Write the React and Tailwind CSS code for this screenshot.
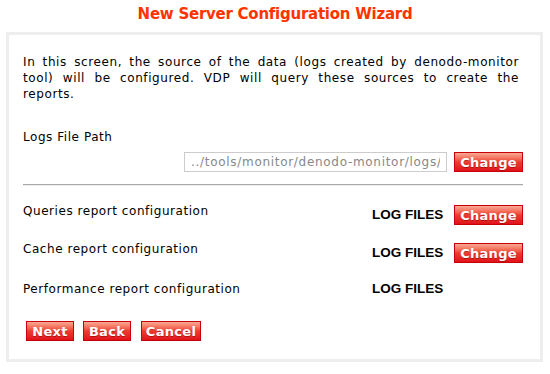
const Btn = ({ label, w }) => (
    <button
        type="button"
        className={`h-[20px] ${w} border border-[#c8000a] bg-gradient-to-b from-[#f7a893] via-[#ee3a30] to-[#e0101a] text-white font-bold text-[13px] leading-none tracking-[0.3px] [text-shadow:0_1px_0_rgba(120,0,0,0.5)] flex items-center justify-center`}
    >
        {label}
    </button>
);

const ConfigRow = ({ label, withButton, className = '' }) => (
    <div className={`flex items-start ${className}`}>
        <div className="flex-1 leading-[16px]">{label}</div>
        <div className={`flex items-center w-[151px] ${withButton ? 'mt-[2px]' : ''}`}>
            <span
                className="w-[74px] mr-[8px] font-bold text-[13.5px] leading-[16px] tracking-normal whitespace-nowrap"
                style={{ fontFamily: '"Liberation Sans", Arial, sans-serif' }}
            >
                LOG FILES
            </span>
            {withButton && <Btn label="Change" w="w-[69px]" />}
        </div>
    </div>
);

export default function App() {
    return (
        <div className="w-[550px] h-[374px] bg-white text-[12px] text-black tracking-[0.55px]" style={{ fontFamily: '"DejaVu Sans", Verdana, sans-serif' }}>
            <h1 className="h-[32px] pt-[5px] text-center text-[15px] font-bold text-[#ff3300] leading-[18px] tracking-[-0.25px]">
                New Server Configuration Wizard
            </h1>
            <div className="ml-[6px] w-[537px] h-[330px] border-[3px] border-[#eeeeee] pl-[14px] pr-[17px] pt-[19px]">
                <p className="w-[496px] text-justify leading-[16px] tracking-[0.6px]">
                    In this screen, the source of the data (logs created by denodo-monitor tool) will be configured. VDP will query these sources to create the reports.
                </p>

                <div className="mt-[27px] leading-[16px]">Logs File Path</div>
                <div className="mt-[7px] flex justify-end items-center">
                    <input
                        type="text"
                        readOnly
                        value="../tools/monitor/denodo-monitor/logs/"
                        className="w-[263px] h-[20px] border border-[#cccccc] px-[6px] text-[12px] tracking-[0.7px] text-[#888888] outline-none"
                    />
                    <div className="ml-[7px]">
                        <Btn label="Change" w="w-[69px]" />
                    </div>
                </div>

                <div className="mt-[12px] h-[2px] border-t border-[#a8a8a8] border-b border-b-[#eeeeee]"></div>

                <div className="mt-[17px] flex flex-col">
                    <ConfigRow label="Queries report configuration" withButton />
                    <ConfigRow label="Cache report configuration" withButton className="mt-[16px]" />
                    <ConfigRow label="Performance report configuration" className="mt-[18px]" />
                </div>

                <div className="mt-[24px] flex pl-[3px]">
                    <Btn label="Next" w="w-[48px]" />
                    <div className="ml-[9px]">
                        <Btn label="Back" w="w-[48px]" />
                    </div>
                    <div className="ml-[10px]">
                        <Btn label="Cancel" w="w-[60px]" />
                    </div>
                </div>
            </div>
        </div>
    );
}
